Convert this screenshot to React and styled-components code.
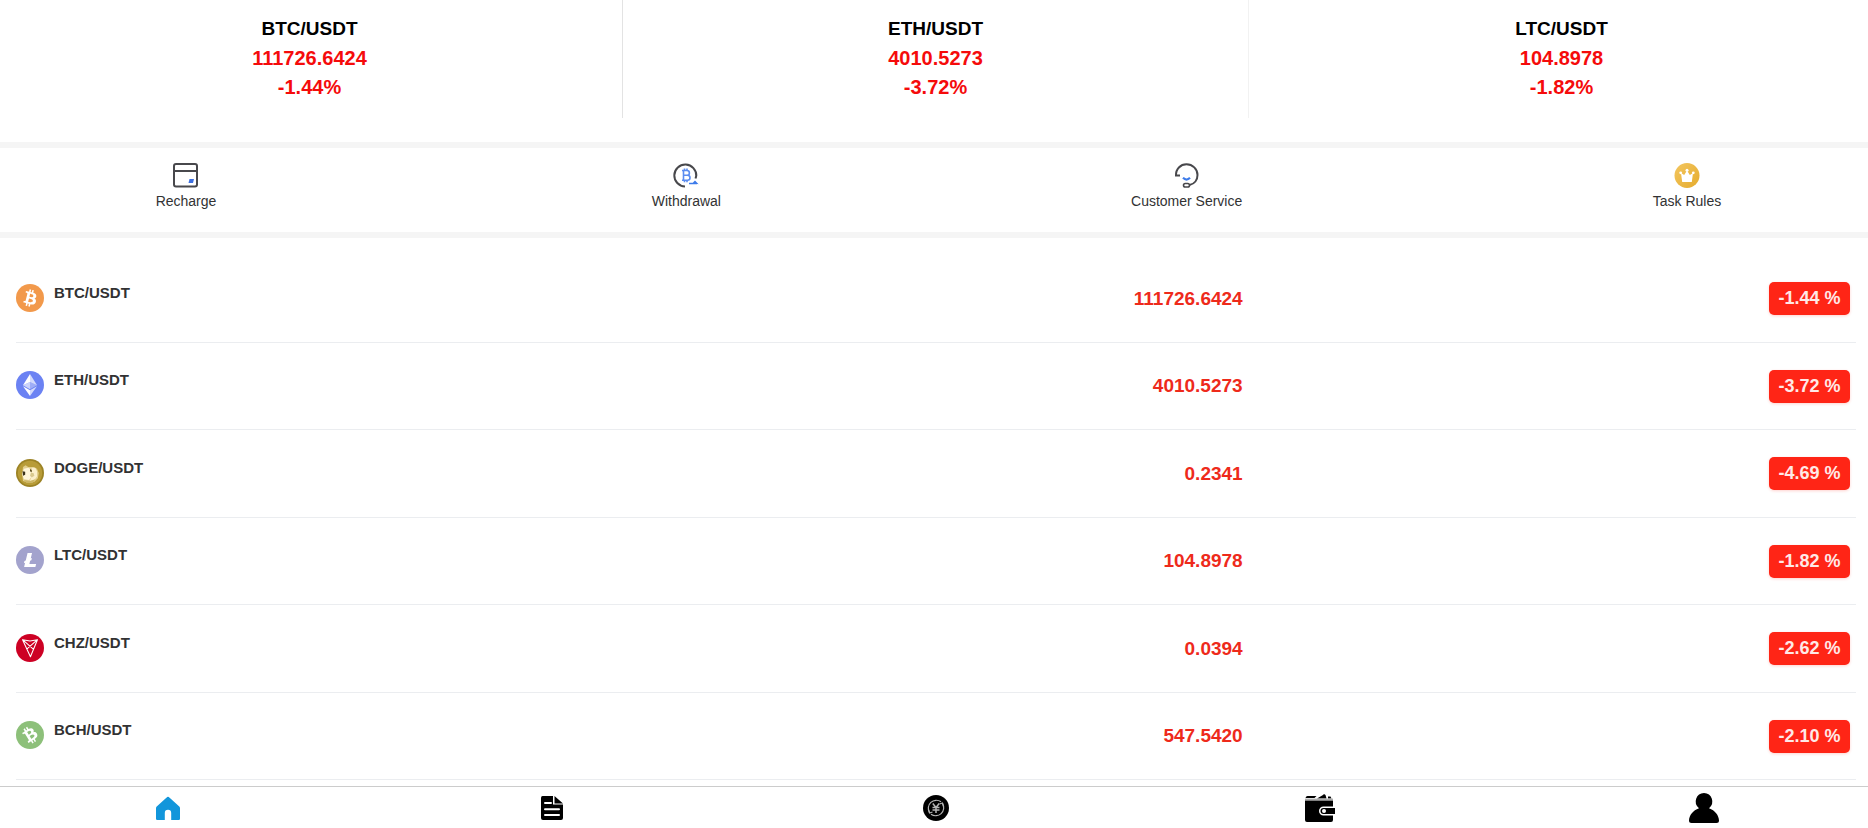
import React from "react";
import styled, { createGlobalStyle } from "styled-components";

const GlobalStyle = createGlobalStyle`
  *, *::before, *::after { box-sizing: border-box; }
  body {
    margin: 0;
    background: #fff;
    color: #323233;
    font-family: "Liberation Sans", Arial, Helvetica, sans-serif;
  }
`;

const Page = styled.main`
  padding-bottom: 48px;
`;

const Tickers = styled.section`
  overflow: hidden;
  border-bottom: 6px solid #f5f5f5;
  padding-bottom: 24px;
`;

const TickerGrid = styled.div`
  display: grid;
  grid-template-columns: repeat(3, 1fr);
  margin: 0 -6px 0 -4px;
`;

const Ticker = styled.article`
  padding: 14px 0 16px;
  text-align: center;
  font-weight: bold;
  border-left: 1px solid ${(p) => p.$line};
`;

const TickerName = styled.h2`
  margin: 0 0 1px;
  font-size: 19px;
  line-height: 29px;
  color: #000;
`;

const TickerValue = styled.p`
  margin: 0;
  font-size: 20px;
  line-height: 29px;
  color: #f50b0b;
`;

const Actions = styled.nav`
  display: flex;
  justify-content: space-between;
  padding: 14px 117px 21px 122px;
  border-bottom: 6px solid #f5f5f5;
`;

const Action = styled.button`
  display: flex;
  flex-direction: column;
  align-items: center;
  gap: 1px;
  width: 128px;
  padding: 0;
  border: 0;
  background: none;
  color: #323233;
  font: inherit;
  font-size: 14px;
  line-height: 20px;
  cursor: pointer;
`;

const ActionIcon = styled.svg`
  width: 28px;
  height: 28px;
`;

const Market = styled.ul`
  list-style: none;
  margin: 0;
  padding: 17px 12px 0 16px;
`;

const Pair = styled.li`
  display: grid;
  grid-template-columns: repeat(3, 1fr);
  align-items: center;
  height: 88px;
  border-bottom: 1px solid #ebedf0;

  &:nth-child(even) {
    height: 87px;
  }
`;

const PairLabel = styled.div`
  display: flex;
  align-items: flex-start;
  gap: 10px;
  padding-bottom: 2px;
`;

const CoinIcon = styled.svg`
  width: 28px;
  height: 28px;
  flex: none;
`;

const PairName = styled.span`
  font-size: 15px;
  line-height: 18px;
  font-weight: bold;
`;

const Price = styled.span`
  font-size: 19px;
  line-height: 24px;
  font-weight: bold;
  text-align: right;
  color: #ee2a1b;
`;

const Change = styled.span`
  justify-self: end;
  min-width: 81px;
  margin-right: 6px;
  padding: 0 8px;
  border-radius: 5px;
  background: #ff2516;
  box-shadow: 0 1px 3px rgba(255, 37, 22, 0.2);
  color: #ffe9e7;
  font-size: 18px;
  line-height: 33px;
  font-weight: bold;
  text-align: center;
`;

const TabBar = styled.nav`
  position: fixed;
  left: 0;
  right: 0;
  bottom: 0;
  display: flex;
  justify-content: space-between;
  align-items: center;
  height: 42px;
  padding: 0 146px 0 150px;
  border-top: 1px solid #ccc;
  background: #fff;
`;

const Tab = styled.a`
  display: flex;
  justify-content: center;
  width: 36px;
  color: ${(p) => (p.$active ? "#1296db" : "#000")};
`;

const TabIcon = styled.svg`
  width: 32px;
  height: 32px;
  display: block;
`;

const BITCOIN =
  "M23.189 14.02c.314-2.096-1.283-3.223-3.465-3.975l.708-2.84-1.728-.43-.69 2.765c-.454-.114-.92-.22-1.385-.326l.695-2.783L15.596 6l-.708 2.839c-.376-.086-.746-.17-1.104-.26l.002-.009-2.384-.595-.46 1.846s1.283.294 1.256.312c.7.175.826.638.805 1.006l-.806 3.235c.048.012.11.03.18.057l-.183-.045-1.13 4.532c-.086.212-.303.531-.793.41.018.025-1.256-.313-1.256-.313l-.858 1.978 2.25.561c.418.105.828.215 1.231.318l-.715 2.872 1.727.43.708-2.84c.472.127.93.245 1.378.357l-.706 2.828 1.728.43.715-2.866c2.948.558 5.164.333 6.097-2.333.752-2.146-.037-3.385-1.588-4.192 1.13-.26 1.98-1.003 2.207-2.538zm-3.95 5.538c-.533 2.147-4.148.986-5.32.695l.95-3.805c1.172.293 4.929.872 4.37 3.11zm.535-5.569c-.487 1.953-3.495.96-4.47.717l.86-3.45c.975.243 4.118.696 3.61 2.733z";

const Coin = ({ color, children }) => (
  <CoinIcon viewBox="0 0 32 32" aria-hidden="true">
    <circle cx="16" cy="16" r="16" fill={color} />
    {children}
  </CoinIcon>
);

const coins = {
  BTC: (
    <Coin color="#f2994b">
      <path d={BITCOIN} fill="#fff" />
    </Coin>
  ),
  ETH: (
    <Coin color="#6b82f3">
      <g fill="#fff">
        <path fillOpacity=".7" d="M16 3.5v9.2l8 3.6z" />
        <path d="M16 3.5L8 16.3l8-3.6z" />
        <path fillOpacity=".7" d="M16 22v6.5l8-11z" />
        <path d="M16 28.500V22l-8-4.500z" />
        <path fillOpacity=".35" d="M16 20.800l8-4.500-8-3.600z" />
        <path fillOpacity=".65" d="M8 16.300l8 4.500v-8.100z" />
      </g>
    </Coin>
  ),
  DOGE: (
    <Coin color="#9c8325">
      <circle cx="16" cy="16" r="14" fill="#b89c38" />
      <path d="M8 9l3-2 3 2h6l4 2 2 5-1 6-4 4-7 1-6-2-1-8z" fill="#e2cf8e" />
      <path d="M9 11l5-1 3 2v9l-2 3-6-1-2-6z" fill="#fff6dc" />
      <path d="M18 10h4l2 4v6l-3 4-5 1 1-3z" fill="#fbefcb" />
      <path d="M7.500 14l3 .5v3.500l-2.500 1z" fill="#3a321c" />
      <path d="M16 11.500l2 1v2.500l-2-1z" fill="#5b4d21" />
      <path d="M17 16h3l1 3-3 2-2-2z" fill="#d9c98f" />
      <path d="M9 24l7 1 6-2-3 4.500h-7z" fill="#cdb665" />
    </Coin>
  ),
  LTC: (
    <Coin color="#a3a3cd">
      <path
        fill="#fff"
        d="M10.427 19.214L9 19.768l.688-2.759 1.444-.58L13.213 8h5.129l-1.519 6.196 1.41-.571-.68 2.75-1.427.571-.848 3.483H23L22.127 24H9.252z"
      />
    </Coin>
  ),
  CHZ: (
    <Coin color="#cd0124">
      <path
        fill="none"
        stroke="#fff"
        strokeWidth="1.200"
        strokeLinejoin="round"
        d="M7.500 6.500L16 8l8.500-1.500L16.500 26zM7.500 6.500l12.500 11M24.500 6.500L12 17.500"
      />
    </Coin>
  ),
  BCH: (
    <Coin color="#8dc07a">
      <path d={BITCOIN} fill="#fff" transform="rotate(-46 16 16)" />
    </Coin>
  ),
};

const tickers = [
  { name: "BTC/USDT", price: "111726.6424", change: "-1.44%", line: "transparent" },
  { name: "ETH/USDT", price: "4010.5273", change: "-3.72%", line: "#e3e3e3" },
  { name: "LTC/USDT", price: "104.8978", change: "-1.82%", line: "#f2f2f2" },
];

const pairs = [
  { coin: "BTC", price: "111726.6424", change: "-1.44 %" },
  { coin: "ETH", price: "4010.5273", change: "-3.72 %" },
  { coin: "DOGE", price: "0.2341", change: "-4.69 %" },
  { coin: "LTC", price: "104.8978", change: "-1.82 %" },
  { coin: "CHZ", price: "0.0394", change: "-2.62 %" },
  { coin: "BCH", price: "547.5420", change: "-2.10 %" },
];

const actions = [
  {
    label: "Recharge",
    icon: (
      <>
        <rect x="2" y="2" width="23" height="22.500" rx="2" fill="none" stroke="#48484c" strokeWidth="2" />
        <path d="M2 9h23" stroke="#48484c" strokeWidth="2" />
        <path d="M17.500 17h4.500l-1 4h-4.500z" fill="#3d6fe0" />
      </>
    ),
  },
  {
    label: "Withdrawal",
    icon: (
      <>
        <path
          d="M24.300 14A11 11 0 1 0 13 24.500M24.300 12.500a11 11 0 0 1-.800 4"
          fill="none"
          stroke="#48484c"
          strokeWidth="2"
        />
        <path
          d="M10 8.500h5a2.300 2.300 0 0 1 0 4.800h-3.500M11.500 13.300h4a2.500 2.500 0 0 1 0 5H10M11.500 8.500v10M12.500 6.500v2M15 6.500v2M12.500 18.300v2M15 18.300v2"
          fill="none"
          stroke="#5a8cf0"
          strokeWidth="1.600"
        />
        <path d="M17 21.500h8M22 20.500l1-1 1.500 1.500z" fill="#3d7bea" stroke="#3d7bea" strokeWidth="1.400" />
      </>
    ),
  },
  {
    label: "Customer Service",
    icon: (
      <>
        <path
          d="M7 13.500H3C2.700 7 7.500 2.300 13.500 2.300S24.500 7 24.500 13c0 5-3 9-8 10"
          fill="none"
          stroke="#48484c"
          strokeWidth="2"
        />
        <rect x="10.500" y="21.500" width="6" height="3.500" rx="1.800" fill="none" stroke="#48484c" strokeWidth="1.600" />
        <path d="M10 15.800q3.500 3.500 7 0" fill="none" stroke="#3d7bea" strokeWidth="2.200" />
      </>
    ),
  },
  {
    label: "Task Rules",
    icon: (
      <>
        <defs>
          <linearGradient id="gold" x1="0" y1="0" x2="1" y2="1">
            <stop offset="0" stopColor="#f3c660" />
            <stop offset="1" stopColor="#e5ab2c" />
          </linearGradient>
        </defs>
        <circle cx="14" cy="13.500" r="12.500" fill="url(#gold)" />
        <path d="M8 11l3.200 2L14 8.500l2.800 4.500L20 11l-1.200 9H9.200z" fill="#fff" />
        <circle cx="14" cy="8.300" r="1.500" fill="#fff" />
        <circle cx="7.700" cy="10.800" r="1.400" fill="#fff" />
        <circle cx="20.300" cy="10.800" r="1.400" fill="#fff" />
      </>
    ),
  },
];

const tabs = [
  {
    label: "Home",
    active: true,
    icon: (
      <path
        fill="currentColor"
        d="M15.200 5a1.200 1.200 0 0 1 1.600 0l10.500 9.600q.7.700.7 1.600V26.800q0 1.200-1.200 1.200H19.200V21a3.200 3.200 0 0 0-6.400 0v7H5.200Q4 28 4 26.800V16.200q0-.9.700-1.600z"
      />
    ),
  },
  {
    label: "Orders",
    icon: (
      <>
        <path fill="currentColor" d="M6.500 4H17v8.500h10V26q0 2-2 2H7q-2 0-2-2V6q0-2 1.500-2zM18.500 4l8.500 7.500h-8.500z" />
        <path stroke="#fff" strokeWidth="2" strokeLinecap="round" d="M9 11h6M9 17.300h14M9 23h14" />
      </>
    ),
  },
  {
    label: "Trade",
    icon: (
      <>
        <circle cx="16" cy="16" r="13" fill="currentColor" />
        <g fill="none" stroke="#b5b5b5">
          <path d="M9.500 20.500A8 8 0 0 1 21 9.800M22.500 11.500A8 8 0 0 1 11 22.200" strokeWidth="1.200" />
          <path d="M12.800 11.500l3.200 4 3.200-4M12.500 15.500h7M12.500 18h7M16 15.500v5.500" strokeWidth="1.500" />
          <path d="M8.500 17.500l1 3.500 3-1M23.500 14.500l-1-3.500-3 1" strokeWidth="1.200" />
        </g>
      </>
    ),
  },
  {
    label: "Wallet",
    icon: (
      <>
        <path
          fill="currentColor"
          d="M1 8.500V28q0 2 2 2h24q2 0 2-2v-4.500H19.500a4.500 4.500 0 0 1 0-9H29V8.500zM3.500 4h9l-2 2H1.500q.5-2 2-2zM13 6.500l6-3.500 1-1 1.500 1 1 3.500zM24 4.500h2.500l1 2H24z"
        />
        <path fill="currentColor" d="M19.500 16H31v6H19.500a3 3 0 0 1 0-6z" />
        <circle cx="20" cy="19" r="2" fill="#fff" />
        <path d="M1 7.300h28" stroke="#aaa" strokeWidth="1.400" />
      </>
    ),
  },
  {
    label: "Profile",
    icon: (
      <path
        fill="currentColor"
        d="M16 1a8.500 8.500 0 0 1 5 15.200C27 18.500 30.800 23 31 28.500q0 2.500-2.500 2.500h-25Q1 31 1 28.500C1.200 23 5 18.500 11 16.200A8.500 8.500 0 0 1 16 1z"
      />
    ),
  },
];

export default function App() {
  return (
    <>
      <GlobalStyle />
      <Page>
        <Tickers>
          <TickerGrid>
            {tickers.map((t) => (
              <Ticker key={t.name} $line={t.line}>
                <TickerName>{t.name}</TickerName>
                <TickerValue>{t.price}</TickerValue>
                <TickerValue>{t.change}</TickerValue>
              </Ticker>
            ))}
          </TickerGrid>
        </Tickers>

        <Actions>
          {actions.map((a) => (
            <Action key={a.label} type="button">
              <ActionIcon viewBox="0 0 28 28" aria-hidden="true">
                {a.icon}
              </ActionIcon>
              {a.label}
            </Action>
          ))}
        </Actions>

        <Market>
          {pairs.map((p) => (
            <Pair key={p.coin}>
              <PairLabel>
                {coins[p.coin]}
                <PairName>{p.coin}/USDT</PairName>
              </PairLabel>
              <Price>{p.price}</Price>
              <Change>{p.change}</Change>
            </Pair>
          ))}
        </Market>
      </Page>

      <TabBar>
        {tabs.map((t) => (
          <Tab key={t.label} href="#" aria-label={t.label} $active={t.active}>
            <TabIcon viewBox="0 0 32 32" aria-hidden="true">
              {t.icon}
            </TabIcon>
          </Tab>
        ))}
      </TabBar>
    </>
  );
}
